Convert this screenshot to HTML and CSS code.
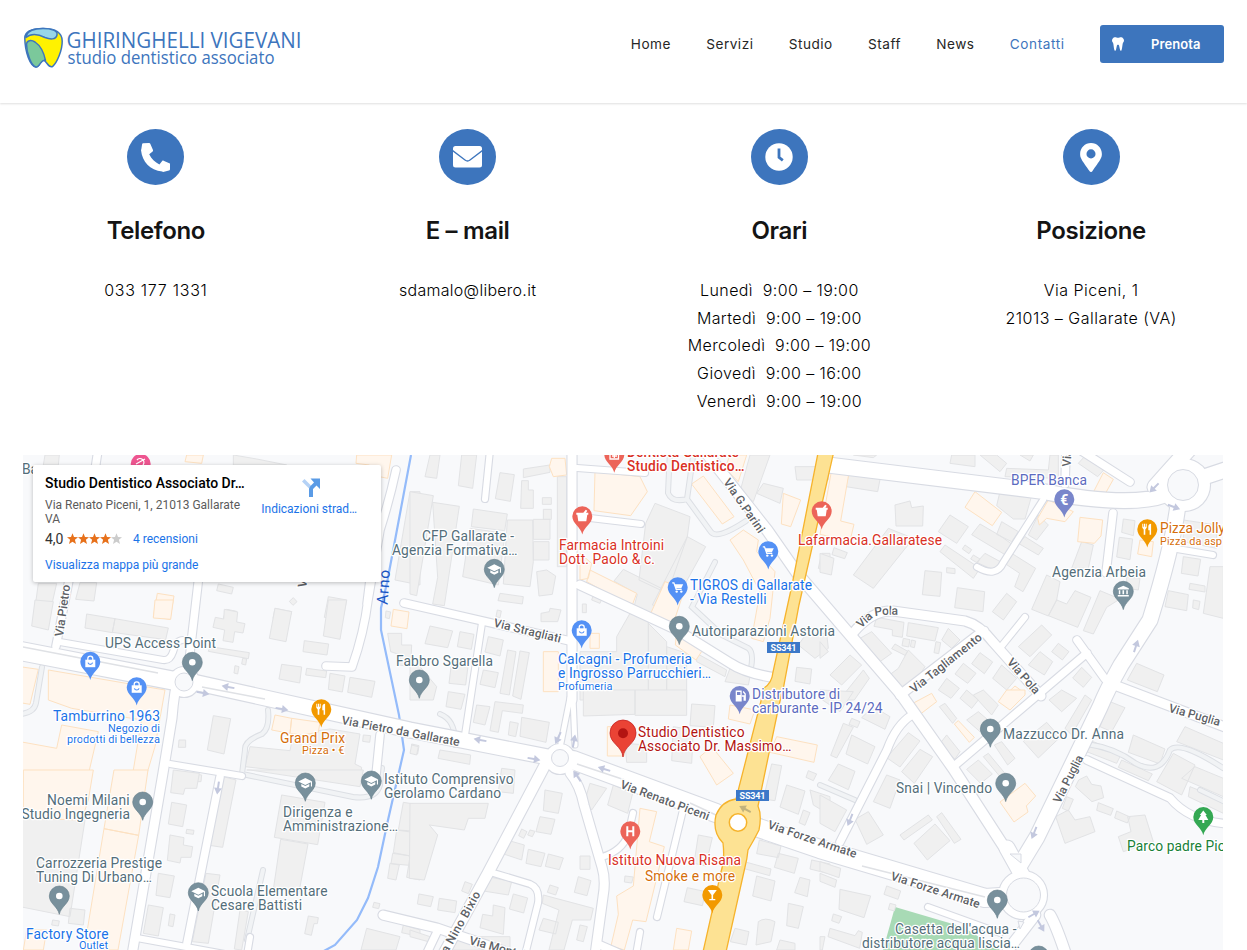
FILE: index.html
```html
<!DOCTYPE html>
<html lang="it">
<head>
<meta charset="utf-8">
<title>Contatti – Ghiringhelli Vigevani</title>
<link rel="stylesheet" href="styles.css">
</head>
<body>
<header class="header">
  <svg class="logo" width="280" height="44" viewBox="22 27 280 44" role="img" aria-label="Ghiringhelli Vigevani studio dentistico associato">
    <g class="logo-tooth">
      <path class="tooth-yellow" d="M24.800 38C25 31 33 28.600 43 28.600C54 28.600 62 32 62.200 41C62.400 50 57 63 52.500 66.600C48 68.500 46.500 60 43 60C40 60 40 67 36 67C30 66 25 52 24.800 38Z"/>
      <path class="tooth-green" d="M26.500 44C27 40.500 31 39.500 35 42C41 46 44 53 45.500 60.500C41.500 58 40 67 36 67C31.500 66 26.500 54 26.500 44Z"/>
      <path class="tooth-sky" d="M26 36C28 30.500 34 28.600 43 28.600C51 28.600 58 30.500 57 35C56 40 50 39.500 45 37.500C39 34.500 32 32.500 26 37.500Z"/>
    </g>
    <text class="logo-name" x="66.500" y="47.700" textLength="235" lengthAdjust="spacingAndGlyphs">GHIRINGHELLI VIGEVANI</text>
    <text class="logo-sub" x="67.500" y="64.200" textLength="207" lengthAdjust="spacingAndGlyphs">studio dentistico associato</text>
  </svg>
  <nav class="nav">
    <a>Home</a><a>Servizi</a><a>Studio</a><a>Staff</a><a>News</a><a class="active">Contatti</a>
    <a class="book"><svg width="12" height="14" viewBox="0 0 448 512"><path d="M443.980 96.250c-11-45.100-47-82-92-92.900-49-12-72 17-128 17S145 -8.700 96 3.300C51 14.300 15 51.200 4 96.300c-9 37 1 72 20 99 14 20 24 43 28 67 9 56 16 150 41 223 11 35 46 35 54-1 11-49 18-101 31-146 8-30 21-50 46-50s38 20 46 50c13 45 20 97 31 146 8 36 43 36 54 1 25-73 32-167 41-223 4-24 14-47 28-67 19-27 29-62 20-99z"/></svg><span>Prenota</span></a>
  </nav>
</header>

<main>
  <section class="contacts">
    <article class="contact">
      <div class="disc"><svg width="29" height="29" viewBox="0 0 512 512"><path d="M493.400 487.300l-104 24c-5 1-10-1-13-6-222-24-352-170-376-376-1-8 2-15 5-21L18.600 24.600c2-9 9-16 18-18l104-6c10-1 19 4 23 13l48 112c3 8 1 18-6 24l-60.600 49c38 78 102 142 180 180l49-60.600c6-7 16-9 24-6l112 48c9 4 14 13 13 23l-12 86c-2 9-9 16-17.600 18.300z" class="handset"/></svg></div>
      <h2>Telefono</h2>
      <p class="phone">033 177 1331</p>
    </article>
    <article class="contact">
      <div class="disc"><svg width="29" height="22" viewBox="0 0 29 22"><rect width="29" height="21.500" rx="2.500"/><path class="flap" d="M-.5 4.500L12 14Q14.500 16 17 14L29.500 4.500"/></svg></div>
      <h2>E – mail</h2>
      <p class="email">sdamalo@libero.it</p>
    </article>
    <article class="contact">
      <div class="disc"><svg width="28" height="28" viewBox="0 0 28 28"><circle cx="14" cy="14" r="13.700"/><path class="clock-hands" d="M14 5.500V14.300L17.800 17.300"/></svg></div>
      <h2>Orari</h2>
      <p class="hours">Lunedì&nbsp; 9:00 – 19:00<br>Martedì&nbsp; 9:00 – 19:00<br>Mercoledì&nbsp; 9:00 – 19:00<br>Giovedì&nbsp; 9:00 – 16:00<br>Venerdì&nbsp; 9:00 – 19:00</p>
    </article>
    <article class="contact">
      <div class="disc"><svg width="22" height="29" viewBox="0 0 384 512"><path fill-rule="evenodd" d="M172 502C27 291 0 270 0 192 0 86 86 0 192 0s192 86 192 192c0 78-27 99-172 310-9 14-30 14-40 0zM192 272a80 80 0 1 0 0-160 80 80 0 0 0 0 160z"/></svg></div>
      <h2>Posizione</h2>
      <p>Via Piceni, 1<br>21013 – Gallarate (VA)</p>
    </article>
  </section>

  <section class="map">
    <svg class="map-canvas" width="1200" height="495" viewBox="23 455 1200 495">
      <defs>
        <path id="pin" d="M0 18.300C-1.600 10.500-10 7.500-10 0A10 10 0 1 1 10 0C10 7.500 1.600 10.500 0 18.300Z"/>
        <g id="place"><use href="#pin"/><circle class="ink" r="3.300"/></g>
        <g id="bag"><use href="#pin"/><path class="ink" d="M-5-2H5V5.500H-5Z"/><path class="ink-line" d="M-2.500-1V-3A2.500 2.500 0 0 1 2.500-3V-1"/><path class="cut-line" d="M-2.300 1A2.400 2.400 0 0 0 2.300 1"/></g>
        <g id="cart"><use href="#pin"/><path class="ink-line" d="M-5.500-4.500H-3.800L-1.500 2H4"/><path class="ink" d="M-3.300-3H5.500L3.600 1H-2Z"/><circle class="ink" cx="-1" cy="4.300" r="1.200"/><circle class="ink" cx="3.600" cy="4.300" r="1.200"/></g>
        <g id="cap"><use href="#pin"/><path class="ink" d="M0-5L7-1.500 0 2-7-1.500ZM-4 1V3.500L0 5.500 4 3.500V1L0 3ZM5.600-1H6.700V3.500H5.600Z"/></g>
        <g id="fork"><use href="#pin"/><path class="ink" d="M-5-5.500H-4V-2.500H-3.300V-5.500H-2.300V-2.500H-1.600V-5.500H-.6V-1.500L-2 .2V5.500H-3.600V.2L-5-1.500ZM3.800-5.500V5.500H2.300V1H1V-2.500C1-4.500 2.200-5.500 3.800-5.500Z"/></g>
        <g id="mortar"><use href="#pin"/><path class="ink" d="M-6-3.500H1L3.500-6.500 5-5.500 3.700-3.500H6V-1.500H5L4 5H-4L-5-1.500H-6Z"/></g>
        <g id="bank"><use href="#pin"/><path class="ink" d="M0-5.500L5.500-3V-1.800H-5.500V-3ZM-4.500-1H-3V3H-4.500ZM-.8-1H.8V3H-.8ZM3-1H4.500V3H3ZM-5.500 3.800H5.500V5.200H-5.500Z"/></g>
        <g id="fuel"><use href="#pin"/><path class="ink" fill-rule="evenodd" d="M-4-5.500H2V5.500H-4ZM-2.700-4V-1H.7V-4Z"/><path class="ink-line" d="M2 0H4.500V4H5.500V-2L3.500-4.500"/></g>
        <g id="glass"><use href="#pin"/><path class="ink" d="M-4.500-5H4.500L.8 0V4H3V5.200H-3V4H-.8V0Z"/></g>
        <g id="tree"><use href="#pin"/><path class="ink" d="M0-6.500L3.500-2H2.200L5 3H1V6H-1V3H-5L-2.200-2H-3.500Z"/></g>
        <g id="arrow"><path d="M-6.500-1H0V-4L6.500 0 0 4V1H-6.500Z"/></g>
        <g id="roads">
          <g class="w5"><path d="M570 698L561 743M573 698L575 745"/></g>
          <g class="w7"><path d="M60 642L163 660Q170 661 173 652Q176 640 183 640M170 764L242 776M137 938L230 955M250 937L247 955M490 872L530 884Q540 888 538 903L525 955M602 857Q622 851 628 835L633 813M683 810L657 917M640 932L636 955M490 450L485 499M577 468L645 473M590 518L641 524M482 623L465 735M1043 500L1003 563Q996 578 977 567M1000 648L1025 617M1177 549L1213 555M928 907L1000 933"/></g>
          <g class="w8"><path d="M56 646L70 575M98 450L95 470M199 575L188 670M380 735L376 775M220 777L187 943M368 600Q364 633 352 667L326 666M370 580L367 604M396 470Q390 498 380 530L368 600M437 932L426 955M600 945L630 958M404 603L570 641M1113 513L1106 573M1066 450L1065 484M1080 450L1130 482M953 767L1087 653M1077 640L1105 679M1087 760L1170 798Q1190 822 1230 824M912 715Q896 725 887 750L840 842"/></g>
          <g class="w10"><path d="M175 692Q173 705 172 718L163 773L132 955M383 915L437 928L515 955M570 773Q580 785 584 805L602 867Q606 880 603 897L595 955M572 450V700M580 585L677 630L730 663Q745 673 776 678M853 633Q872 610 893 611L965 621Q980 625 993 642L1041 696M900 695L982 632L984 631M1117 686L1225 727"/></g>
          <g class="w12"><path d="M545 765L488 873L443 955M700 445L767 530L797 573L857 643L900 693L953 768L1008 853M1050 915Q1056 925 1066 955M1035 915L1008 950"/></g>
          <g class="w16"><path d="M1178 505Q1173 545 1150 620L1121 665Q1107 690 1100 707L1073 763L1037 837L1020 865M1007 848L1022 875M184 680L410 730L548 757M828 465L1040 491Q1130 508 1165 495L1155 487Q1168 472 1190 448M1195 480L1225 470"/></g>
          <g class="w20"><path d="M10 649L175 681M573 760L716 813M750 825L820 849L985 898L1015 896"/></g>
          <circle cx="184" cy="682" r="15"/><circle cx="560" cy="759" r="15"/><circle cx="1023" cy="895" r="24"/><circle cx="1184" cy="485" r="26"/>
        </g>
        <path id="pola" d="M861 628.500L873.500 617Q877 614.500 900 614.800"/>
      </defs>
      <rect class="land" x="23" y="455" width="1200" height="495"/>
      <path class="park" d="M895 907L963 927L1000 950H883Z"/>

      <g class="building">
        <path transform="translate(20 450) scale(.33333)" d="M75 15l-5 30h45l3-30zM55 400h55l-25 110H40zM180 398h50l-8 55-55-5zM205 495l65 12-3 15-65-12zM595 402l45 10-5 20-45-10zM620 478l30 6-5 26-35-6zM765 475l50 10-8 25-48-5zM925 440l55 10-12 60-55-8zM1170 125h30v280l-75-15zM820 443l11 12-12 11-11-12zM640 15l70 12 90 18h-160z"/>
        <path transform="translate(20 600) scale(.33333)" d="M45 0l55 5-15 85-50-12zM200 42l85 14-8 42-82-14zM285 56l160 28-8 35-160-22zM613 28l40 8-3 30 25 5-6 28-25-4-5 32-30-5 5-32-35-8 7-30 25 5zM765 25l50 10-17 90-50-10zM925 0h55l-20 118-50-10zM853 122l73 10-5 33-72-10zM785 193l60 8-6 48-62-12zM860 205l60 8-3 20-60-8zM930 220l45 8-8 48-42-8zM990 232l75 12-10 48-72-15zM570 140l118 18-3 18-120-22zM668 175l12 2-3 18-12-3zM645 197l12 3-4 22-11-3zM580 347l52 9-20 106-50-12zM477 420h20v22h-22zM690 440l120 12 10-50 110-15 90 15-15 90 20 10-5 38-345-40zM465 515l80 10-2 20h-85zM1030 405l22 2-3 20-21-3zM1175 432l22 5-4 25-18-8zM1103 100h42v35h30l-3 65-35-5 5-30-30-10zM1098 33l14 3-4 20-12-3z"/>
        <path transform="translate(20 770) scale(.33333)" d="M0 145l195 5-45 290-150-30zM150 415l45 5-5 45-45-5zM98 450l20 3-3 15-20-3zM460 0l78 10-8 45h-35l-5 18-38-5zM455 97l45 8-12 65-43-8zM450 195l42 8-2 22 28 5-5 32h-30l-3 17-38-8zM415 310l48 8-13 65-42-7zM385 405l45 8-15 85-45-8zM500 178l22 3-2 12-22-3zM450 432l15 3-6 35-14-3zM610 20l38 10-40 202-40-6zM558 310l42 5-35 205-48-5zM785 75l130 22-22 127-130-22zM782 208l82 14-28 150-75-20zM660 420l25 5-20 115-22-3zM865 438l30 5-3 18h-10l-8 35-20-5zM1062 397l18 4-4 15-18-4zM1150 97l50 8v80l-65-5zM1130 180l70 10-20 70-60-12zM1118 250l55 8-5 28-55-5zM1110 280l28 5-10 45-25-5zM1180 200h20v130l-40-8zM1040 475l100 25-12 40h-105zM1150 465l50 15v20l-55-12zM680 0h350l-10 50-330-50z"/>
        <path transform="translate(410 450) scale(.33333)" d="M60 15h30l-10 70-35-5zM155 15h45l-12 100-43-8zM270 68l43 6-12 80-45-8zM340 57l80-12v22l-80 16zM335 92h20v28h15v55h-38zM442 80h28v270h-28zM397 143h27v20h-27zM400 178h24v30h-24zM0 125l70 12-50 300-20-5zM68 157l80 12-45 298-35-5 15-80zM190 177l102 15-8 50-100-12zM292 210h76l2 125-10 75-80-8zM370 208h50v60h-50zM370 275h47v55h-47zM180 235l105 15-20 155-107-25zM380 365l30-5 27 18-10 55-40 5zM270 430l70 10-3 22-73-10zM420 475l33 5-10 35h-50v-25l25-5zM262 480l12 3-4 20-12-3zM60 528l68 15-15 50-68-12zM235 560l45 10-10 48-45-12zM150 545l42 8-8 45-42-8zM125 635l50 5-8 65-50-5zM220 660l45 8-10 45-45-10zM293 600l25 5-20 130-28-5zM330 603l28 5-25 140-25-10zM517 462h12v26h-12zM550 435l25 12-5 13-25-10zM735 160l105 40-8 60-60 170-85-40 20-170zM832 260l55 30-105 190-55-15zM640 358l120 60-30 90-60-30 12-45-70-40zM660 490l55 20v240h-205v-145h110v-45zM715 520l55 55v175h-55zM770 590l60 20v140h-60zM860 610l90 50-5 20-85-45zM960 655l60 25-5 25-70-10zM1160 652l45 5-5 45-45-8zM1190 550h60l5 45-40 30-50-40zM1060 100l60 15-10 45-70-30zM1155 50h100v40h-95zM1020 15h60l-50 140-40-30zM1235 310h25v60l-35-15zM0 640l30 10 50 60-10 40H0z"/>
        <path transform="translate(410 690) scale(.33333)" d="M520 0h155v73l-155 5zM675 0h155v76h-155zM845 42l70 5-5 65-70-5zM790 110l60 10-5 100-60-8zM645 160l65 5v52h-60zM115 5l50 8-12 45-45-8zM200 45l40 5-15 55-35-8zM255 35l85 10-3 25-60-8-12 65-25-5zM300 95l25 5-8 40-22-5zM335 82l83 15-10 60-78-18zM90 180l92 15-3 28-95-18zM275 235l40 5-5 70-45-5zM5 165l20 5-5 25-20-5zM405 300l52 10-12 60-45-8zM0 340l235 0-10 45-50 0-12 35-105-15 25 30-40 135-45-5zM390 380l45 8-12 45-45-8zM335 417l16 8-10 20-15-8zM360 420l15 4-8 16-14-5zM290 450l53 15-8 45-60-20zM355 478l50 12-12 40-45-10zM415 492l45 12-12 35-42-10zM510 498h30v40h-30zM505 560l38 12-12 45-38-10zM235 560l70 15-10 40-75-12zM165 575l22 8-12 28-20-8zM27 612l43 8-8 30-40-8zM88 625l52 8-5 35-52-8zM310 612l43 12-12 45-43-12zM250 645l35 8-5 80-70-20 8-40 30 5zM420 585l25 8-8 22-25-8zM400 615l150 40-8 35h-55l-25 90h-45l30-120-50-20zM400 685l45 12-8 35-50-12zM510 705l22 5-12 45-20-5zM540 280l50 15-45 65-20-30zM610 285l58 25-15 60-60-25zM645 558l25 3-5 18-22-3zM865 435l42 8-20 85-35-8zM832 593l55 12-10 42-55-12zM1085 222l30 5-20 105-35-5zM1130 285l55 18-20 70-55-22zM1180 360l20 8-15 38-18-8zM1200 300l60 20v55l-50-30zM1048 450l65 18-8 35-65-12zM1105 490l60 15-12 45-60-18zM1040 558l55 15-12 60-55-15zM1170 562l30 8-8 50-38-12zM1135 640l45 10-15 65-35-8zM975 715l42 10-8 40-48-10zM1045 695q20-15 50 0l-12 60-45 10zM1110 750l45 10v20h-55zM1205 510l55 12v30l-60-15zM1003 515l80 22-4 20-80-22zM1195 242l25 10-10 20-22-10zM130 740h170v40H110zM0 720l60 20-5 15-55-15z"/>
        <path transform="translate(820 450) scale(.33333)" d="M88 65l95 8-10 52-95-15zM225 165l45-12 5 20 35-5-2 60-80 0zM205 235l75 30-120 150-60-40zM395 15h70v35l-75-10zM480 15h50l30 25-20 25zM100 15l60 8 10-8zM600 15h40l-10 18zM775 40l20-22 58 40-20 22zM560 55l125 5 5-45h25v70l-160-5zM540 125l95 12-20 70h-35l-50-40zM390 195l55 35-35 50-55-35zM480 222l60 35 35 25-20 32-100-60zM545 215l50 30-20 30-45-22zM655 195l30 30-35 45-25-15zM615 260l55 35-15 20-60-35zM375 285l105 70-20 30-100-80zM495 310l55 30-25 22-55-25zM575 310l72 45-38 70-25-15 15-40-45-30zM785 275l35 10-15 70h-50zM315 362l50 5-5 72-53-5zM380 353l25 3v15l-25-3zM412 413l82 12-5 60-85-12zM560 430l30 25-40 55-33-25zM680 375l40 20-10 55-25 48-50-20zM710 450l30 12 25-40 48 20-40 90-88-35zM840 422l60 25-40 25-40 80-30-10zM910 207l35 5-5 45-35-10zM898 262l40 5-8 62-40-8zM1090 320l52 8-8 50-50-8zM1110 400l45 8v18l-48-8zM1045 422l60 12-5 48-65-12zM1170 350h40v155l-60-15zM1120 450l20 4-4 25-18-5zM1090 210l100 15v70l-100-20zM920 380l40 5-5 35-35-5zM170 502l82 15-5 45-30-5v-18l-55-10zM265 518l90 15-10 40-85-15zM155 545l60 65-35 25-60-70zM385 535l35 35-25 25-30-25zM225 582l38 22-8 12-40-20zM265 600l50 50-45 70h-60l-15-35 40-30zM665 525l30 30-65 65-35-30zM660 605l38 30-25 40-48-30zM715 580l32 25-20 25-32-25zM480 608l38 28-25 35-38-30zM430 640l38 30-25 30-38-28zM545 645l45 40-30 35-42-35zM380 685l38 30-25 30-38-25zM785 652l30 30-25 30-32-28zM950 640l82 35-20 50-90-35zM90 615l35 30-60 60-35-30zM130 660l18 25-45 65H58zM0 575l25 30-25 20zM0 310l42 15-8 50-34-8zM42 293l40 15-8 18-38-12zM250 565l20 4-4 22-20-4zM275 570l12 3-4 20-12-3zM348 575l14 3-6 33-14-3zM435 285l20 14-8 12-20-14zM460 315l20 12-8 12-20-12z"/>
        <path transform="translate(820 690) scale(.33333)" d="M70 100l30 12-50 92-18-8zM95 85l25 10-8 18-25-10zM95 135l70 35-22 52-65-30zM55 222l50 22-20 55-60-28zM265 128l35 25-60 78-40-28zM200 255l40 15-30 85-50-20zM0 315l80 45-35 65-45-25zM300 178l38 22-55 80-38-35zM145 365l45 70-50 28-35-75zM325 375l12 15-85 60-12-15zM345 402l45 50-68 58-40-50zM365 368l58 80-20 12-53-80zM160 50l50 30-15 38-70-35zM0 0l100 5-40 60-60-40zM380 135l40 50-15 22-50-40zM490 0l45 45-20 30-55-60zM475 65l35 30-30 30-40-35zM375 40l35 45-12 15-40-50zM440 0l35 30-20 25-35-30zM475 210l42 42-35 28-42-42zM505 190l50 60-15 10-50-60zM545 155l40 50-22 20-40-60zM680 97l40 45-65 62-45-50zM725 0l45 25-45 40-38-35zM795 15l20 15-60 105-20-20zM870 35l45 18-40 72-35-15zM940 135l95 42-15 45-95-35zM820 155l85 35-15 30-90-35zM905 210l92 42-12 20-90-40zM1095 110l115 50v50l-140-55zM1060 190l65 35-40 90-75-40zM1125 230l85 35v55l-125-55zM1110 290l100 40v40l-105-50zM800 258l15 25 28 5 8 35-35 12-50-45 10-20zM740 320l20 8-15 35-18-8zM745 360l20 30 45-10 15 45-90 35-28-80zM835 338l45 18-8 20-42-15zM890 363l40 18-8 18-38-15zM975 375l25 80-90 30-15-45 38-15-10-45zM60 598l92 20-20 65-75-25zM0 515l62 20-5 28-57-20zM0 550l50 20-5 22-45-18zM200 588l42 15-8 25-42-15zM210 640l18 5-5 18-18-5zM40 672l25 8-8 20-22-8zM30 715l75 22 10-15 12 5-8 48-95-35zM0 740h15l-8 40H0z"/>
      </g>

      <g class="shop">
        <path transform="translate(20 450) scale(.33333)" d="M412 430l50 8-12 70-50-8zM1010 15h105l-12 70-50-10-5-30-40-5zM500 15h50l-5 25-50-5z"/>
        <path transform="translate(20 600) scale(.33333)" d="M405 0h55l-8 58-52-4zM85 210l350 60-30 170-30 100h-40l30-180-210-35-70-25zM0 425l110 20 15-70 110 20-35 150H0zM0 200l55 8-25 105-30-5zM765 345l50 10-5 45-55-10zM815 355l85 12-5 30-50 8-35-5zM1120 28l47 8-6 50-48-8z"/>
        <path transform="translate(20 770) scale(.33333)" d="M10 0h210l-15 90-20 60-175-5zM282 0h102l-28 196-104-20zM252 176l104 20-62 344h-102zM20 480h60l-10 60H10z"/>
        <path transform="translate(410 450) scale(.33333)" d="M425 25h40l5 50-40 5-12-30zM555 65l135 15 22 45-50 72-110-15zM880 78l92 122-35 22-92-120zM1000 240l45 30-5 35 55 60-15 140-20 70-35-10 25-140-50-95-40-60zM765 395l60 20-35 105-70-25zM540 360l140 70-15 40-135-75zM510 310l35 30-10 45-25 5zM400 605h45v120h-45zM540 550h28v45h-28zM800 545l78 55-20 30-62-45zM1120 130l52 20-30 80-28-8zM960 15h50l-25 80-40-40z"/>
        <path transform="translate(410 690) scale(.33333)" d="M592 110h60l-10 88h-50zM905 170l65 80-50 35-50-85zM960 45l75 15-15 42-65-15zM1100 140l122 25-10 52-132-30zM690 355l50 10-22 90 45 15-55 225-40-5-25 90-40-12 22-95-5-55 50-30zM800 715l45 8-10 57h-45z"/>
        <path transform="translate(820 450) scale(.33333)" d="M35 60l52 8-25 145 40 10-12 50-90-20zM465 125l80 62-28 40-82-55zM685 150l75 35-25 30-55-10-22 20-5-20zM780 202l68 8-5 48-20 22-50-5zM960 270l40 5-5 45-42-8zM585 708l30 22-15 20h-60zM850 68l30 20-28 50-30-15z"/>
        <path transform="translate(820 690) scale(.33333)" d="M335 10l15 25-55 42-20-35zM560 0h55v15l-45 45-35-25zM415 92l48 50-15 15-45-55zM615 280l32 38-28 30 5 18-42 30-42-60z"/>
      </g>

      <g id="service" class="service">
        <path d="M42 667L36 703Q34 713 20 714M268 710Q270 728 262 734Q244 741 245 750L242 774L353 797Q376 800 380 785L382 768M263 870L247 940M670 450L668 493Q672 503 687 499L711 532Q717 540 746 521M694 450L687 499M715 562L692 607L722 635L748 648Q754 652 751 668M455 745Q456 720 440 714"/>
        <path d="M1087 744Q1115 748 1135 763Q1160 777 1170 750Q1180 740 1223 768M820 785L855 800M1200 790L1225 802"/>
      </g>
      <use href="#service" class="service-fill"/>

      <path class="river" d="M411 455L387 583L381 608V630L399 715L404 750L388 820L378 867L368 898L357 920L335 945L322 952"/>

      <use href="#roads" class="road-edge"/>
      <use href="#roads" class="road-fill"/>
      <g class="island"><circle cx="184" cy="682" r="9"/><circle cx="560" cy="758" r="8.500"/><circle cx="1023.500" cy="895" r="17"/><circle cx="1183" cy="485" r="15.500"/><path d="M1010 854H1021V863Z"/><path d="M1018 921L1024 922 1020 929Z"/></g>
      <path class="divider" d="M23 647L158 673M202 687L265 699M577 764L625 780M690 803L716 815M862 866L985 897"/>

      <path class="highway" d="M818 453H833.500L799 605L783 690Q780 700 778 710L758 806Q762 815 759 830Q754 840 748 850Q747 860 745 867L726 952H703L721 872Q725 860 723 843Q712 832 716 815Q722 801 736 799L762 697Q765 690 764 688Q772 683 773 672L792 585Z"/>
      <circle class="highway-island" cx="738" cy="822.500" r="8.700"/>

      <g class="arrows">
        <use href="#arrow" transform="translate(228 687) rotate(190)"/><use href="#arrow" transform="translate(203 693) rotate(10)"/><use href="#arrow" transform="translate(282 709) rotate(10)"/><use href="#arrow" transform="translate(480 740) rotate(190)"/><use href="#arrow" transform="translate(534 759) rotate(10)"/><use href="#arrow" transform="translate(558 738) rotate(115)"/><use href="#arrow" transform="translate(574 741) rotate(-80)"/><use href="#arrow" transform="translate(604 769) rotate(197)"/><use href="#arrow" transform="translate(577 776) rotate(235)"/><use href="#arrow" class="dim" transform="translate(745 809) rotate(208)"/><use href="#arrow" transform="translate(218 788) rotate(98)"/><use href="#arrow" transform="translate(1154 488) rotate(135)"/><use href="#arrow" transform="translate(1174 507) rotate(20)"/><use href="#arrow" transform="translate(1136 646) rotate(-72)"/><use href="#arrow" transform="translate(850 820) rotate(112)"/><use href="#arrow" transform="translate(1034 833) rotate(112)"/><use href="#arrow" transform="translate(1034 914) rotate(-30)"/><use href="#arrow" transform="translate(1041 926) rotate(60)"/>
      </g>

      <g class="street">
        <text transform="translate(341 724) rotate(10.600)" textLength="120">Via Pietro da Gallarate</text>
        <text transform="translate(619.500 787.700) rotate(20.400)" textLength="94">Via Renato Piceni</text>
        <text transform="translate(767 828) rotate(18.800)" textLength="93">Via Forze Armate</text>
        <text transform="translate(890 879.500) rotate(18)" textLength="93">Via Forze Armate</text>
        <text transform="translate(1168 711.700) rotate(15.700)" textLength="53">Via Puglia</text>
        <text transform="translate(1060 804) rotate(-63)" textLength="52">Via Puglia</text>
        <text textLength="42"><textPath href="#pola">Via Pola</textPath></text>
        <text transform="translate(1006.500 662.500) rotate(49)" textLength="43">Via Pola</text>
        <text transform="translate(914 693.500) rotate(-38.500)" textLength="88">Via Tagliamento</text>
        <text transform="translate(493 626.500) rotate(13.600)" textLength="69">Via Stragliati</text>
        <text transform="translate(723 482) rotate(55.500)" textLength="63">Via G.Parini</text>
        <text transform="translate(442 964) rotate(-61)" textLength="80">Via Nino Bixio</text>
        <text transform="translate(468.500 944) rotate(15)">Via Montello</text>
        <text transform="translate(63 637) rotate(-82)">Via Pietro da Gallarate</text>
        <text transform="translate(1070.500 467) rotate(-86)">Via</text>
        <text transform="translate(306 588) rotate(-80)">Via</text>
      </g>
      <text class="water" transform="translate(387.500 605) rotate(-86)" textLength="35">Arno</text>

      <g class="shield"><rect x="767" y="642" width="33" height="11"/><text x="783.500" y="650.500" textLength="26">SS341</text><rect x="736" y="790" width="33" height="11"/><text x="752.500" y="798.700" textLength="26">SS341</text></g>

      <g class="pin-grey">
        <use href="#place" x="192.300" y="662.300"/><use href="#place" x="419.300" y="680"/><use href="#cap" x="494.300" y="569.300"/><use href="#place" x="679.300" y="626.300"/><use href="#bank" x="1123.300" y="591.300"/><use href="#place" x="990.300" y="729"/><use href="#place" x="1005.700" y="783.300"/><use href="#place" x="997.300" y="900"/><use href="#place" x="1038.700" y="956"/><use href="#place" x="142.700" y="802"/><use href="#cap" x="305.300" y="783"/><use href="#cap" x="371.300" y="781"/><use href="#place" x="59.300" y="896"/><use href="#cap" x="198.300" y="892.700"/>
      </g>
      <g class="pin-blue"><use href="#bag" x="90.300" y="661.700"/><use href="#bag" x="136.700" y="687.300"/><use href="#bag" x="581.700" y="630.300"/><use href="#cart" x="768.300" y="551.300"/><use href="#cart" x="677.700" y="587.300"/></g>
      <g class="pin-orange"><use href="#fork" x="321.300" y="709.300"/><use href="#fork" x="1147.300" y="529.300"/><use href="#glass" x="712.300" y="895"/></g>
      <g class="pin-coral"><use href="#mortar" x="582.300" y="516.300"/><use href="#mortar" x="821.700" y="511.300"/><use href="#pin" x="614.300" y="454.500"/><path class="ink-line" d="M610 452V459H618.500V452M612 456H617M614.300 453V458"/><use href="#pin" x="630.300" y="831.300"/><path class="ink" d="M626.300 826.300H628.300V830.300H632.300V826.300H634.300V836.300H632.300V832.200H628.300V836.300H626.300Z"/></g>
      <g class="pin-indigo"><use href="#pin" x="1064.300" y="499.300"/><text class="euro" x="1064.300" y="504.500">€</text><use href="#fuel" x="739.700" y="696"/></g>
      <g class="pin-green"><use href="#tree" x="1203.300" y="817"/></g>
      <g class="pin-pink"><use href="#pin" x="140.700" y="464"/><path class="ink-line" d="M136 464L145 459M137 460A3 3 0 0 1 143 465"/></g>
      <g class="pin-red"><path d="M623 757C622 746 610 743.500 610 733A13 13 0 1 1 636 733C636 743.500 624 746 623 757Z"/><circle class="pin-core" cx="623" cy="733.300" r="5"/></g>

      <g class="label grey">
        <text x="422" y="541.300" textLength="92">CFP Gallarate -</text><text x="392" y="555.300" textLength="125.500">Agenzia Formativa…</text>
        <text x="396" y="666.300" textLength="97">Fabbro Sgarella</text>
        <text x="105" y="648.300" textLength="111">UPS Access Point</text>
        <text x="47" y="805.300" textLength="82.500">Noemi Milani</text><text x="21.500" y="819.300" textLength="108.500">Studio Ingegneria</text>
        <text x="283" y="817.300" textLength="69.500">Dirigenza e</text><text x="283" y="831.300" textLength="115">Amministrazione…</text>
        <text x="384" y="784.300" textLength="129.500">Istituto Comprensivo</text><text x="384" y="798.300" textLength="117">Gerolamo Cardano</text>
        <text x="36" y="868.300" textLength="126">Carrozzeria Prestige</text><text x="36" y="882.300" textLength="116">Tuning Di Urbano…</text>
        <text x="211" y="896.300" textLength="116.500">Scuola Elementare</text><text x="211" y="910.300" textLength="91">Cesare Battisti</text>
        <text x="692" y="636.300" textLength="143">Autoriparazioni Astoria</text>
        <text x="1052" y="577.300" textLength="94">Agenzia Arbeia</text>
        <text x="1003" y="739.300" textLength="121">Mazzucco Dr. Anna</text>
        <text x="896" y="793.300" textLength="96">Snai | Vincendo</text>
        <text x="895" y="934.300" textLength="121.500">Casetta dell'acqua -</text><text x="862" y="948.300" textLength="158">distributore acqua liscia…</text>
        <text x="22" y="474">Ba</text>
      </g>
      <g class="label blue">
        <text x="53" y="721.300" textLength="107">Tamburrino 1963</text><text class="small" x="108" y="732.300" textLength="52">Negozio di</text><text class="small" x="67" y="743.300" textLength="93">prodotti di bellezza</text>
        <text x="26" y="939.300" textLength="82.500">Factory Store</text><text class="small" x="79" y="949.300" textLength="29">Outlet</text>
        <text x="690" y="590.300" textLength="122">TIGROS di Gallarate</text><text x="690" y="604.300" textLength="76.500">- Via Restelli</text>
        <text x="558" y="664.300" textLength="134">Calcagni - Profumeria</text><text x="558" y="678.300" textLength="153">e Ingrosso Parrucchieri…</text><text class="small" x="558" y="689.700" textLength="54.500">Profumeria</text>
      </g>
      <g class="label orange">
        <text x="280" y="743.300" textLength="65">Grand Prix</text><text class="small" x="302" y="754" textLength="42.500">Pizza • €</text>
        <text x="645" y="881" textLength="90">Smoke e more</text>
        <text x="1160" y="533.300" textLength="65">Pizza Jolly</text><text class="small" x="1160" y="545" textLength="62">Pizza da asp</text>
      </g>
      <g class="label red">
        <text class="strong" x="627" y="457" textLength="112">Dentista Gallarate</text><text class="strong" x="627" y="471.300" textLength="117.500">Studio Dentistico…</text>
        <text x="559" y="550.300" textLength="105">Farmacia Introini</text><text x="559" y="564.300" textLength="96">Dott. Paolo &amp; c.</text>
        <text x="798" y="545.300" textLength="144">Lafarmacia.Gallaratese</text>
        <text x="608" y="865.300" textLength="133">Istituto Nuova Risana</text>
      </g>
      <g class="label dark-red"><text x="638" y="737.300" textLength="106.500">Studio Dentistico</text><text x="638" y="751.300" textLength="153.500">Associato Dr. Massimo…</text></g>
      <g class="label indigo"><text x="752" y="699.300" textLength="88">Distributore di</text><text x="752" y="713.300" textLength="130.500">carburante - IP 24/24</text><text x="1011" y="485.300" textLength="76">BPER Banca</text></g>
      <g class="label green"><text x="1127" y="851.300" textLength="98.500">Parco padre Pio</text></g>
    </svg>

    <aside class="place-card">
      <div class="place-info">
        <h3>Studio Dentistico Associato Dr…</h3>
        <p class="address">Via Renato Piceni, 1, 21013 Gallarate VA</p>
        <div class="rating"><b>4,0</b>
          <svg width="56" height="12" viewBox="0 0 56 12"><defs><path id="star" d="M5.500 .2L7 4 11 4.200 7.900 6.800 9 11 5.500 8.700 2 11 3.100 6.800 0 4.200 4 4Z"/></defs><use href="#star"/><use href="#star" x="11"/><use href="#star" x="22"/><use href="#star" x="33"/><use href="#star" x="44" class="star-off"/></svg>
          <a>4 recensioni</a></div>
        <a class="larger">Visualizza mappa più grande</a>
      </div>
      <div class="directions">
        <svg width="20" height="20" viewBox="0 0 20 20"><path class="turn-soft" d="M1 3.500L3.500 1 10 7.500 7.800 10.200Z"/><path class="turn" d="M19 .5V11L15.500 7.500 12 11V19H8V11Q8 9.500 9 8.500L13 4.500 9.500 .5Z"/></svg>
        <a>Indicazioni strad…</a>
      </div>
    </aside>
  </section>
</main>
</body>
</html>
```
FILE: styles.css
```css
* { box-sizing: border-box; }
body {
  margin: 0;
  height: 950px;
  overflow: hidden;
  background: #fff;
  color: #141414;
  font-family: Inter, "Liberation Sans", sans-serif;
}

.header {
  display: flex;
  justify-content: space-between;
  align-items: flex-start;
  height: 103px;
  padding: 25px 23px 0 22px;
  box-shadow: 0 1px 2px rgba(0, 0, 0, .13);
}
.logo { margin-top: 2px; overflow: hidden; }
.logo-tooth path { stroke: #3d75bd; stroke-width: 1.500; stroke-linejoin: round; }
.tooth-yellow { fill: #fff200; }
.tooth-green { fill: #7bc89b; }
.tooth-sky { fill: #97d6e8; }
.logo text { fill: #3d75bd; font-family: "Open Sans", "Noto Sans", sans-serif; }
.logo-name { font-size: 21.700px; }
.logo-sub { font-size: 17.500px; }

.nav { display: flex; align-items: center; gap: 35.300px; height: 38px; font-size: 13.600px; letter-spacing: .5px; color: #262626; }
.nav > a:not(.book) { padding-bottom: 1px; }
.nav .active { color: #3d75bd; letter-spacing: .6px; }
.nav .book {
  display: flex;
  align-items: center;
  width: 124px;
  height: 38px;
  padding-left: 12px;
  gap: 27px;
  border-radius: 3px;
  background: #3d75bd;
  color: #fff;
  font-size: 13px;
  font-weight: 600;
  letter-spacing: .1px;
}
.book svg { fill: #fff; }

.contacts { display: grid; grid-template-columns: repeat(4, 1fr); height: 352px; padding-top: 26px; }
.contact { display: flex; flex-direction: column; align-items: center; text-align: center; }
.disc { display: flex; align-items: center; justify-content: center; width: 57px; height: 56px; border-radius: 50%; background: #3d75bd; }
.disc svg { fill: #fff; }
.flap { fill: none; stroke: #3d75bd; stroke-width: 1.300; }
.clock-hands { fill: none; stroke: #3d75bd; stroke-width: 2.800; }
.contact h2 { margin: 30px 0 0; font-size: 24px; line-height: 32px; font-weight: 600; letter-spacing: -.35px; }
.contact p { margin: 30px 0 0; font-size: 16px; line-height: 27.700px; font-weight: 300; letter-spacing: .5px; color: #000; }
.contact .phone { letter-spacing: .72px; }
.contact .email { letter-spacing: .27px; }
.contact .hours { letter-spacing: .4px; }

.map { position: relative; width: 1200px; height: 495px; margin-left: 23px; font-family: Roboto, "Liberation Sans", sans-serif; }
.map-canvas { display: block; overflow: hidden; }
.land { fill: #f8f9fb; }
.park { fill: #a8dab5; }
.building path { fill: #f0f0f0; stroke: #e2e3e5; stroke-width: 1px; vector-effect: non-scaling-stroke; }
.shop path { fill: #fff6ed; stroke: #fde1c1; stroke-width: 1px; vector-effect: non-scaling-stroke; }
#service { fill: none; stroke-linecap: round; stroke: var(--service, #dcdfe4); stroke-width: var(--service-width, 6px); }
.service-fill { --service: #f1f3f5; --service-width: 4px; }
.river { fill: none; stroke: #94bbfa; stroke-width: 2.200px; }

.road-edge { --edge: 2.200px; fill: #d8dbe3; stroke: #d8dbe3; }
.road-fill { --edge: 0px; fill: #fff; stroke: #fff; }
#roads { stroke-linecap: round; stroke-linejoin: round; }
#roads path { fill: none; }
#roads circle { stroke-width: var(--edge); }
.w5 { stroke-width: calc(5px + var(--edge)); }
.w7 { stroke-width: calc(6px + var(--edge)); }
.w8 { stroke-width: calc(7.500px + var(--edge)); }
.w10 { stroke-width: calc(9px + var(--edge)); }
.w12 { stroke-width: calc(10.500px + var(--edge)); }
.w16 { stroke-width: calc(15px + var(--edge)); }
.w20 { stroke-width: calc(18px + var(--edge)); }
.island { fill: #f8f9fb; stroke: #d8dbe3; }
.divider { fill: none; stroke: #dfe1e5; stroke-width: 1.500px; }
.highway { fill: #fde293; stroke: #f6b32c; stroke-width: 1.300px; }
.highway-island { fill: #fff; stroke: #f6b32c; stroke-width: 1.500px; }
.arrows { fill: #c3c8de; }
.arrows .dim { fill: #c3b37c; }

.street text { font-size: 12px; font-weight: 500; fill: #5d6166; stroke: #fff; stroke-width: 2.500px; paint-order: stroke; }
.water { font-size: 15.500px; fill: #1a56c4; }
.shield rect { fill: #3c78c8; }
.shield text { fill: #fff; font-size: 9px; font-weight: 700; text-anchor: middle; }

.ink { fill: #fff; stroke: none; }
.ink-line { fill: none; stroke: #fff; stroke-width: 1.300px; }
.cut-line { fill: none; stroke: #5491f5; stroke-width: 1.200px; }
.pin-grey { fill: #78909c; stroke: #607985; stroke-width: .6px; }
.pin-blue { fill: #5491f5; }
.pin-orange { fill: #f29900; }
.pin-coral { fill: #ec6459; }
.pin-indigo { fill: #7986cb; }
.pin-green { fill: #34a853; }
.pin-pink { fill: #ee5590; }
.pin-red { fill: #ea4335; stroke: #c5221f; stroke-width: .8px; }
.pin-core { fill: #b31412; stroke: none; }
.euro { fill: #fff; font-size: 14px; font-weight: 700; text-anchor: middle; }

.label text { font-size: 13.800px; stroke: #fff; stroke-width: 2.500px; stroke-linejoin: round; paint-order: stroke; }
.label .small { font-size: 11px; }
.label .strong { font-weight: 500; }
.label.grey { fill: #546e7a; }
.label.blue { fill: #1a73e8; }
.label.orange { fill: #d56e0c; }
.label.red { fill: #d93025; }
.label.dark-red { fill: #b31412; }
.label.indigo { fill: #5c6bc0; }
.label.green { fill: #188038; }

.place-card {
  position: absolute;
  left: 10px;
  top: 10px;
  display: flex;
  width: 348px;
  height: 117px;
  padding: 9px 12px;
  border-radius: 2px;
  background: #fff;
  box-shadow: 0 1px 4px rgba(0, 0, 0, .25);
  font-size: 12px;
}
.place-card a { color: #1a73e8; }
.place-info { width: 205px; }
.place-info h3 { margin: 0; font-size: 14px; line-height: 18px; font-weight: 500; color: #000; white-space: nowrap; }
.address { margin: 6px 0 0; line-height: 14px; color: #5b5b5b; letter-spacing: 0; }
.rating { display: flex; align-items: center; height: 16px; margin-top: 5px; }
.rating b { width: 22px; font-size: 14px; font-weight: 400; color: #333; letter-spacing: -.1px; }
.rating svg { fill: #e7711b; }
.rating .star-off { fill: #ccc; }
.rating a { margin-left: 10px; }
.larger { display: block; margin-top: 10px; line-height: 16px; }
.directions { display: flex; flex-direction: column; align-items: center; width: 120px; padding-top: 4px; gap: 4px; }
.directions svg { margin-left: 4px; }
.directions a { line-height: 14px; }
.turn { fill: #5a9be6; }
.turn-soft { fill: #b5d2f6; }
```
